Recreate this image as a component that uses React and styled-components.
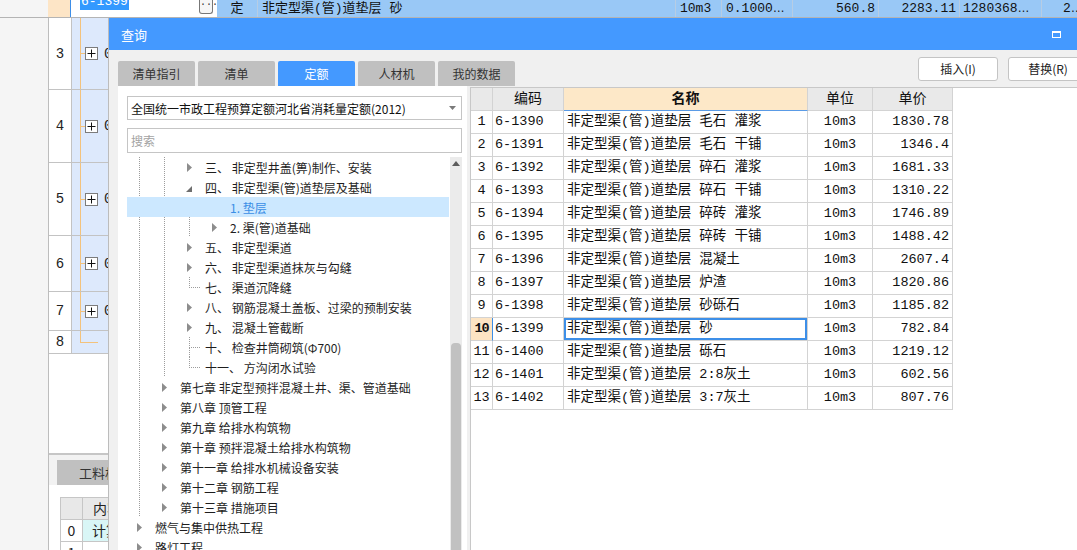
import React from 'react';
import styled, { createGlobalStyle, css } from 'styled-components';

const GRID_FONT = `"Liberation Mono", "Noto Sans CJK SC", monospace`;
const UI_FONT = `"Noto Sans CJK SC", "Noto Sans", sans-serif`;

const GlobalStyle = createGlobalStyle`
  html, body { margin: 0; padding: 0; background: #f5f5f5; }
  body { font-family: ${UI_FONT}; }
  *, *::before, *::after { box-sizing: border-box; }
`;

const Screen = styled.div`
  position: relative;
  width: 1077px;
  height: 550px;
  overflow: hidden;
  background: #f5f5f5;
  display: flex;
  flex-direction: column;
`;

/* ---------- background sheet ---------- */
const TopRow = styled.div`
  display: flex;
  height: 18px;
  flex-shrink: 0;
  border-bottom: 1px solid #b4b4b4;
  font-family: ${GRID_FONT};
  font-size: 13px;
  color: #111;
`;
const TopMargin = styled.div`
  width: 48px;
  flex-shrink: 0;
  background: #f5f5f5;
`;
const TopIdx = styled.div`
  width: 22px;
  flex-shrink: 0;
  background: #fde5c6;
`;
const EditCell = styled.div`
  width: 147px;
  flex-shrink: 0;
  background: #fff;
  border-left: 1px solid #3d8ee8;
  display: flex;
  align-items: flex-start;
  justify-content: space-between;
  padding: 0 4px 0 9px;
`;
const SelText = styled.span`
  display: block;
  height: 10px;
  overflow: hidden;
  background: #3399ff;
  color: #fff;
  font-size: 13px;
  padding: 0 1px;
`;
const SelInner = styled.span`
  display: block;
  margin-top: -6px;
  line-height: 16px;
`;
const DotsButton = styled.span`
  width: 14px;
  height: 14px;
  border: 1px solid #777;
  border-top: none;
  border-radius: 0 0 3px 3px;
  background: #f6f6f6;
  font-size: 10px;
  line-height: 10px;
  text-align: center;
  color: #333;
`;
const BlueCells = styled.div`
  flex: 1;
  display: flex;
  background: #99c8f6;
`;
const BlueCell = styled.div`
  width: ${p => p.$w}px;
  flex-shrink: 0;
  border-right: 1px solid #b7cde4;
  line-height: 17px;
  white-space: nowrap;
  overflow: hidden;
  text-align: ${p => p.$align || 'left'};
  padding: ${p => p.$pad || '0 4px'};
`;
const Ellipsis = styled.span`
  font-family: "Liberation Sans", sans-serif;
  font-size: 12px;
`;

const BgBody = styled.div`
  display: flex;
  flex: 1;
  min-height: 0;
`;
const BgMargin = styled.div`
  width: 48px;
  flex-shrink: 0;
  background: #f5f5f5;
`;
const BgSheet = styled.div`
  width: 60px;
  flex-shrink: 0;
  display: flex;
  flex-direction: column;
  border-left: 1px solid #bdbdbd;
  font-family: ${GRID_FONT};
  font-size: 14px;
`;
const SheetRow = styled.div`
  display: flex;
  height: ${p => p.$h}px;
  flex-shrink: 0;
  border-bottom: 1px solid #c3c3c3;
`;
const SheetIdx = styled.div`
  width: 23px;
  flex-shrink: 0;
  background: #fff;
  border-right: 1px solid #c3c3c3;
  display: flex;
  align-items: center;
  justify-content: center;
  color: #222;
`;
const ORANGE = '#f3c27c';
const SheetTree = styled.div`
  flex: 1;
  overflow: hidden;
  display: flex;
  align-items: center;
  padding-left: 8px;
  white-space: nowrap;
  background: ${p =>
    p.$last
      ? `linear-gradient(${ORANGE}, ${ORANGE}) 8px 0 / 1px 50% no-repeat, linear-gradient(${ORANGE}, ${ORANGE}) 8px 50% / 18px 1px no-repeat, #dde9fc`
      : `linear-gradient(${ORANGE}, ${ORANGE}) 8px 0 / 1px 100% no-repeat, #dde9fc`};
`;
const Stub = styled.span`
  width: 5px;
  height: 1px;
  background: ${ORANGE};
  flex-shrink: 0;
`;
const PlusBox = styled.span`
  width: 13px;
  height: 13px;
  flex-shrink: 0;
  border: 1px solid #7c7c7c;
  background: #fff;
  display: flex;
  align-items: center;
  justify-content: center;
`;
const SheetCode = styled.span`
  margin-left: 6px;
  color: #222;
`;
const WhiteFill = styled.div`
  height: 99px;
  flex-shrink: 0;
  background: #fff;
`;
const Splitter = styled.div`
  height: 2px;
  flex-shrink: 0;
  background: #c6c6c6;
`;
const BottomPanel = styled.div`
  flex: 1;
  background: #f2f2f2;
  padding: 5px 0 0 8px;
  display: flex;
  flex-direction: column;
  overflow: hidden;
`;
const SubTab = styled.div`
  width: 70px;
  height: 25px;
  flex-shrink: 0;
  background: #c0c0c0;
  font-family: ${UI_FONT};
  font-size: 13px;
  line-height: 25px;
  padding-left: 22px;
  white-space: nowrap;
  color: #333;
`;
const SubBody = styled.div`
  flex: 1;
  background: #fff;
  margin-left: -8px;
  padding: 12px 0 0 11px;
`;
const MiniTable = styled.div`
  display: grid;
  grid-template-columns: 22px 60px;
  grid-auto-rows: 22px;
  border-top: 1px solid #c6c6c6;
  border-left: 1px solid #c6c6c6;
`;
const MiniCell = styled.div`
  border-right: 1px solid #c6c6c6;
  border-bottom: 1px solid #c6c6c6;
  background: ${p => p.$bg || '#fff'};
  font-family: ${UI_FONT};
  font-size: 14px;
  line-height: 21px;
  padding-left: ${p => p.$pl || 0}px;
  text-align: ${p => p.$center ? 'center' : 'left'};
  white-space: nowrap;
  overflow: hidden;
  color: #222;
`;

/* ---------- dialog (floats over the sheet) ---------- */
const Dialog = styled.div`
  position: absolute;
  left: 108px;
  top: 18px;
  width: 990px;
  height: 532px;
  display: flex;
  flex-direction: column;
  border-left: 1px solid #bcbcbc;
  background: #f0f0f0;
`;
const TitleBar = styled.div`
  height: 32px;
  flex-shrink: 0;
  background: #4499ff;
  display: flex;
  align-items: center;
  justify-content: space-between;
  padding: 0 37px 0 12px;
  color: #fff;
  font-size: 13px;
`;
const MaxIcon = styled.span`
  width: 9px;
  height: 7px;
  border: 2px solid #fff;
  border-width: 2px 1.5px 1.5px 1.5px;
`;
const DialogBody = styled.div`
  flex: 1;
  min-height: 0;
  display: flex;
  flex-direction: column;
  padding: 7px 0 0 9px;
`;
const ToolRow = styled.div`
  height: 29px;
  flex-shrink: 0;
  display: flex;
  justify-content: space-between;
`;
const Tabs = styled.div`
  align-self: flex-end;
  display: flex;
  gap: 3px;
`;
const Tab = styled.div`
  width: 77px;
  height: 25px;
  border-radius: 2px 2px 0 0;
  background: ${p => (p.$active ? '#4499ff' : '#c0c0c0')};
  color: ${p => (p.$active ? '#fff' : '#333')};
  font-size: 12px;
  line-height: 25px;
  text-align: center;
`;
const Buttons = styled.div`
  align-self: flex-start;
  display: flex;
  gap: 10px;
  margin-right: 10px;
`;
const Button = styled.div`
  width: 80px;
  height: 24px;
  background: #fff;
  border: 1px solid #c4c4c4;
  border-radius: 3px;
  font-size: 12px;
  line-height: 22px;
  text-align: center;
  color: #222;
`;
const Content = styled.div`
  flex: 1;
  min-height: 0;
  display: flex;
  gap: 3px;
`;
const LeftPanel = styled.div`
  width: 349px;
  flex-shrink: 0;
  background: #fff;
  padding: 10px 5px 0 9px;
  display: flex;
  flex-direction: column;
  overflow: hidden;
`;
const SelectBox = styled.div`
  height: 24px;
  flex-shrink: 0;
  border: 1px solid #c5c5c5;
  display: flex;
  align-items: center;
  justify-content: space-between;
  padding: 0 5px 0 3px;
  font-size: 12px;
  color: #111;
  white-space: nowrap;
`;
const SearchBox = styled.div`
  height: 25px;
  flex-shrink: 0;
  margin-top: 8px;
  border: 1px solid #c5c5c5;
  padding-left: 3px;
  font-size: 12px;
  line-height: 23px;
  color: #a3a3a3;
`;
const TreeWrap = styled.div`
  flex: 1;
  min-height: 0;
  margin-top: 4px;
  display: flex;
`;
const TreeList = styled.div`
  flex: 1;
  display: flex;
  flex-direction: column;
  overflow: hidden;
`;
const TreeRow = styled.div`
  display: flex;
  align-items: center;
  height: 20px;
  flex-shrink: 0;
  margin-right: 1px;
  background: ${p => (p.$selected ? '#cce8ff' : 'transparent')};
  color: ${p => (p.$selected ? '#3a8ee6' : '#1e1e1e')};
  font-size: 12px;
  white-space: nowrap;
`;
const DOT = '#9c9c9c';
const Guide = styled.span`
  width: 25px;
  height: 20px;
  flex-shrink: 0;
  ${p =>
    p.$on &&
    css`
      background-image: linear-gradient(to bottom, ${DOT} 1px, transparent 1px);
      background-size: 1px 2px;
      background-position: 12px 0;
      background-repeat: repeat-y;
    `}
`;
const ArrowCell = styled.span`
  width: 25px;
  height: 20px;
  flex-shrink: 0;
  display: flex;
  align-items: center;
  justify-content: center;
`;
const Branch = styled.span`
  width: 25px;
  height: 20px;
  flex-shrink: 0;
  display: flex;
  flex-direction: column;
  padding-left: 12px;
`;
const BranchTop = styled.span`
  width: 11px;
  height: 11px;
  border-left: 1px dotted ${DOT};
  border-bottom: 1px dotted ${DOT};
`;
const BranchRest = styled.span`
  height: 9px;
  border-left: 1px dotted ${DOT};
`;
const TreeText = styled.span`
  margin-left: 3px;
`;
const ScrollBar = styled.div`
  width: 12px;
  flex-shrink: 0;
  background: #ebebeb;
  display: flex;
  flex-direction: column;
  align-items: center;
`;
const ScrollArrow = styled.span`
  height: 12px;
  display: flex;
  align-items: center;
`;
const ScrollThumb = styled.span`
  width: 10px;
  flex: 1;
  margin-top: 174px;
  border-radius: 4px 4px 0 0;
  background: #c1c1c1;
`;

const GridPanel = styled.div`
  flex: 1;
  margin-top: 1px;
  background: #fff;
  border-left: 1px solid #c8c8c8;
  border-top: 1px solid #c8c8c8;
`;
const Grid = styled.div`
  display: grid;
  grid-template-columns: 22px 71px 244px 65px 80px;
  grid-auto-rows: 23px;
  width: max-content;
  font-family: ${GRID_FONT};
  font-size: 13.5px;
  color: #111;
`;
const GCell = styled.div`
  border-right: 1px solid #d3d3d3;
  border-bottom: 1px solid #d3d3d3;
  line-height: 22px;
  white-space: nowrap;
  overflow: hidden;
  text-align: ${p => p.$align || 'left'};
  padding: ${p => p.$pad || '0'};
`;
const HeadCell = styled(GCell)`
  background: ${p => (p.$hot ? '#fde8c8' : '#e9e9e9')};
  font-weight: ${p => (p.$hot ? 700 : 400)};
  font-size: 14px;
  text-align: center;
  ${p => p.$hot && css`border-bottom-color: #5a9be6;`}
`;
const IdxCell = styled(GCell)`
  text-align: center;
  background: ${p => (p.$cur ? '#fde4c3' : '#fff')};
  font-weight: ${p => (p.$cur ? 700 : 400)};
  ${p => p.$cur && css`border-right: 1px solid #3d8fe8; letter-spacing: -1px;`}
`;
const NameCell = styled(GCell)`
  padding: 0 0 0 3px;
  ${p => p.$focus && css`box-shadow: inset 0 0 0 2px #3d8fe8;`}
`;

const RightTri = () => (
  <svg width="5" height="9" viewBox="0 0 5 9"><polygon points="0,0 5,4.5 0,9" fill="#8d8d8d" /></svg>
);
const DownTri = () => (
  <svg width="6" height="6" viewBox="0 0 6 6" style={{ marginTop: 4, marginLeft: -2 }}>
    <polygon points="6,0 6,6 0,6" fill="#6e6e6e" />
  </svg>
);

const treeRows = [
  { lv: 2, kind: 'arrow', text: '三、 非定型井盖(箅)制作、安装' },
  { lv: 2, kind: 'open', text: '四、 非定型渠(管)道垫层及基础' },
  { lv: 3, kind: 'none', text: '1. 垫层', selected: true },
  { lv: 3, kind: 'arrow', text: '2. 渠(管)道基础' },
  { lv: 2, kind: 'arrow', text: '五、 非定型渠道' },
  { lv: 2, kind: 'arrow', text: '六、 非定型渠道抹灰与勾缝' },
  { lv: 2, kind: 'leaf', text: '七、 渠道沉降缝' },
  { lv: 2, kind: 'arrow', text: '八、 钢筋混凝土盖板、过梁的预制安装' },
  { lv: 2, kind: 'arrow', text: '九、 混凝土管截断' },
  { lv: 2, kind: 'leaf', full: true, text: '十、 检查井筒砌筑(Φ700)' },
  { lv: 2, kind: 'leaf', text: '十一、 方沟闭水试验' },
  { lv: 1, kind: 'arrow', text: '第七章 非定型预拌混凝土井、渠、管道基础' },
  { lv: 1, kind: 'arrow', text: '第八章 顶管工程' },
  { lv: 1, kind: 'arrow', text: '第九章 给排水构筑物' },
  { lv: 1, kind: 'arrow', text: '第十章 预拌混凝土给排水构筑物' },
  { lv: 1, kind: 'arrow', text: '第十一章 给排水机械设备安装' },
  { lv: 1, kind: 'arrow', text: '第十二章 钢筋工程' },
  { lv: 1, kind: 'arrow', text: '第十三章 措施项目' },
  { lv: 0, kind: 'arrow', text: '燃气与集中供热工程' },
  { lv: 0, kind: 'arrow', text: '路灯工程' },
];

const P = '非定型渠(管)道垫层 ';
const gridRows = [
  ['1', '6-1390', P + '毛石 灌浆', '1830.78'],
  ['2', '6-1391', P + '毛石 干铺', '1346.4'],
  ['3', '6-1392', P + '碎石 灌浆', '1681.33'],
  ['4', '6-1393', P + '碎石 干铺', '1310.22'],
  ['5', '6-1394', P + '碎砖 灌浆', '1746.89'],
  ['6', '6-1395', P + '碎砖 干铺', '1488.42'],
  ['7', '6-1396', P + '混凝土', '2607.4'],
  ['8', '6-1397', P + '炉渣', '1820.86'],
  ['9', '6-1398', P + '砂砾石', '1185.82'],
  ['10', '6-1399', P + '砂', '782.84'],
  ['11', '6-1400', P + '砾石', '1219.12'],
  ['12', '6-1401', P + '2:8灰土', '602.56'],
  ['13', '6-1402', P + '3:7灰土', '807.76'],
];

const sheetRows = [
  { n: '3', h: 72 },
  { n: '4', h: 73 },
  { n: '5', h: 73 },
  { n: '6', h: 56 },
  { n: '7', h: 39 },
  { n: '8', h: 23, last: true },
];

const PlusIcon = () => (
  <svg width="9" height="9" viewBox="0 0 9 9">
    <path d="M4.5 0.5V8.5M0.5 4.5H8.5" stroke="#111" strokeWidth="1" />
  </svg>
);

function TreeItem({ row }) {
  const guides = [];
  for (let i = 0; i < row.lv; i++) {
    guides.push(<Guide key={i} $on={!row.selected} />);
  }
  let lead;
  if (row.kind === 'arrow') lead = <ArrowCell><RightTri /></ArrowCell>;
  else if (row.kind === 'open') lead = <ArrowCell><DownTri /></ArrowCell>;
  else if (row.kind === 'leaf')
    lead = (
      <Branch>
        <BranchTop />
        {row.full && <BranchRest />}
      </Branch>
    );
  else lead = <ArrowCell />;
  return (
    <TreeRow $selected={row.selected}>
      {guides}
      {lead}
      <TreeText>{row.text}</TreeText>
    </TreeRow>
  );
}

export default function App() {
  return (
    <Screen>
      <GlobalStyle />
      <TopRow>
        <TopMargin />
        <TopIdx />
        <EditCell>
          <SelText><SelInner>6-1399</SelInner></SelText>
          <DotsButton>···</DotsButton>
        </EditCell>
        <BlueCells>
          <BlueCell $w={41} $align="center" $pad="0">定</BlueCell>
          <BlueCell $w={418}>非定型渠(管)道垫层 砂</BlueCell>
          <BlueCell $w={46}>10m3</BlueCell>
          <BlueCell $w={71} $pad="0 0 0 4px">0.1000<Ellipsis>…</Ellipsis></BlueCell>
          <BlueCell $w={86} $align="right" $pad="0 3px">560.8</BlueCell>
          <BlueCell $w={81} $align="right" $pad="0 3px">2283.11</BlueCell>
          <BlueCell $w={82} $pad="0 0 0 3px">1280368<Ellipsis>…</Ellipsis></BlueCell>
          <BlueCell $w={80} $pad="0 0 0 21px">2<Ellipsis>…</Ellipsis></BlueCell>
        </BlueCells>
      </TopRow>

      <BgBody>
        <BgMargin />
        <BgSheet>
          {sheetRows.map(r => (
            <SheetRow key={r.n} $h={r.h}>
              <SheetIdx>{r.n}</SheetIdx>
              <SheetTree $last={r.last}>
                {!r.last && (
                  <>
                    <Stub />
                    <PlusBox><PlusIcon /></PlusBox>
                    <SheetCode>04</SheetCode>
                  </>
                )}
              </SheetTree>
            </SheetRow>
          ))}
          <WhiteFill />
          <Splitter />
          <BottomPanel>
            <SubTab>工料机显示</SubTab>
            <SubBody>
              <MiniTable>
                <MiniCell $bg="#e8e8e8" />
                <MiniCell $bg="#e8e8e8" $pl={10}>内容</MiniCell>
                <MiniCell $center>0</MiniCell>
                <MiniCell $bg="#d9f6f6" $pl={9}>计算</MiniCell>
                <MiniCell $center>1</MiniCell>
                <MiniCell />
              </MiniTable>
            </SubBody>
          </BottomPanel>
        </BgSheet>
      </BgBody>

      <Dialog>
        <TitleBar>
          <span>查询</span>
          <MaxIcon />
        </TitleBar>
        <DialogBody>
          <ToolRow>
            <Tabs>
              <Tab>清单指引</Tab>
              <Tab>清单</Tab>
              <Tab $active>定额</Tab>
              <Tab>人材机</Tab>
              <Tab>我的数据</Tab>
            </Tabs>
            <Buttons>
              <Button>插入(I)</Button>
              <Button>替换(R)</Button>
            </Buttons>
          </ToolRow>
          <Content>
            <LeftPanel>
              <SelectBox>
                <span>全国统一市政工程预算定额河北省消耗量定额(2012)</span>
                <svg width="7" height="4" viewBox="0 0 7 4"><polygon points="0,0 7,0 3.5,4" fill="#7a7a7a" /></svg>
              </SelectBox>
              <SearchBox>搜索</SearchBox>
              <TreeWrap>
                <TreeList>
                  {treeRows.map((r, i) => <TreeItem key={i} row={r} />)}
                </TreeList>
                <ScrollBar>
                  <ScrollArrow>
                    <svg width="8" height="5" viewBox="0 0 8 5"><polygon points="0,5 8,5 4,0" fill="#5c5c5c" /></svg>
                  </ScrollArrow>
                  <ScrollThumb />
                </ScrollBar>
              </TreeWrap>
            </LeftPanel>
            <GridPanel>
              <Grid>
                <HeadCell />
                <HeadCell>编码</HeadCell>
                <HeadCell $hot>名称</HeadCell>
                <HeadCell>单位</HeadCell>
                <HeadCell>单价</HeadCell>
                {gridRows.map(([n, code, name, price]) => {
                  const cur = n === '10';
                  return (
                    <React.Fragment key={n}>
                      <IdxCell $cur={cur}>{n}</IdxCell>
                      <GCell $pad="0 0 0 2px">{code}</GCell>
                      <NameCell $focus={cur}>{name}</NameCell>
                      <GCell $align="center">10m3</GCell>
                      <GCell $align="right" $pad="0 3px 0 0">{price}</GCell>
                    </React.Fragment>
                  );
                })}
              </Grid>
            </GridPanel>
          </Content>
        </DialogBody>
      </Dialog>
    </Screen>
  );
}
